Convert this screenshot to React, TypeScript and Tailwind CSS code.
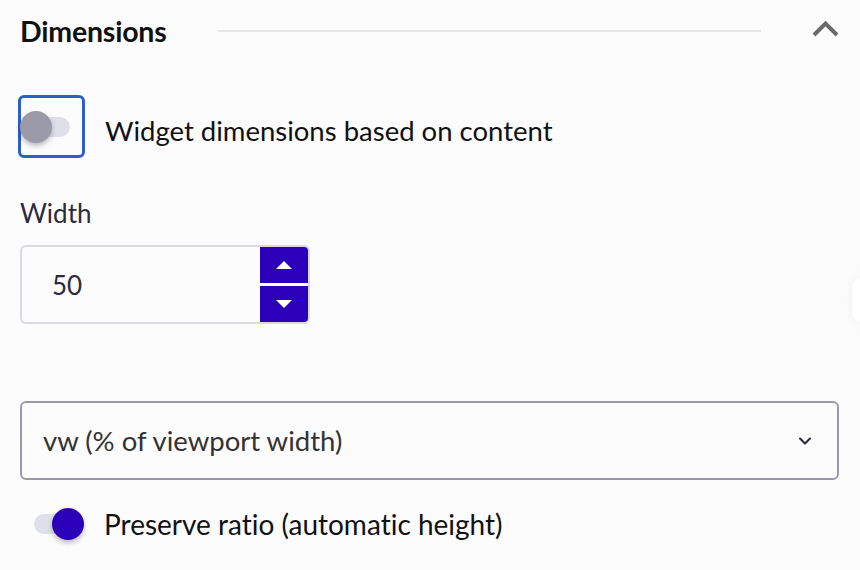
import React from 'react';
import { ChevronDown } from 'lucide-react';

const Toggle: React.FC<{ on: boolean }> = ({ on }) => (
  <div className="relative w-[52px] h-[32px]">
    <div className={`absolute top-[6px] w-[48px] h-[20px] rounded-full bg-[#dfdfe9] ${on ? 'left-[-18px]' : 'left-[2px]'}`} />
    <div
      className={`absolute top-0 w-[32px] h-[32px] rounded-full shadow-[0_3px_5px_rgba(0,0,0,0.25)] ${
        on ? 'left-0 bg-[#2c00b8]' : 'left-0 bg-[#9b9aa8]'
      }`}
    />
  </div>
);

export default function App() {
  return (
    <div className="relative min-h-[570px] overflow-hidden bg-[#fcfcfd] font-['Lato','Liberation_Sans',sans-serif] [font-variant-ligatures:none]">
      {/* section header */}
      <div className="flex h-[62px] items-center pl-[20px] pr-[21px]">
        <h2 className="text-[28.5px] leading-[34px] font-bold text-[#111] tracking-[-0.2px]">Dimensions</h2>
        <div className="mx-[51px] h-[2px] flex-1 bg-[#e6e6e8]" />
        <svg width="27" height="17" viewBox="0 0 27 17" className="mt-[-6px] text-[#6a6a6a]">
          <polyline points="2,15 13.5,3.5 25,15" fill="none" stroke="currentColor" strokeWidth="4" />
        </svg>
      </div>

      {/* content based toggle */}
      <div className="mt-[33px] flex items-center pl-[18px]">
        <div className="flex h-[63px] w-[67px] items-center rounded-[6px] border-[3px] border-[#2d5fcc]">
          <div className="ml-[-1px]">
            <Toggle on={false} />
          </div>
        </div>
        <span className="ml-[20px] mt-[8px] text-[27.5px] leading-[34px] text-[#111]">Widget dimensions based on content</span>
      </div>

      {/* width */}
      <div className="mt-[40px] pl-[20px] text-[26px] leading-[30px] text-[#2b2b3d]">Width</div>
      <div className="mt-[17px] ml-[20px] flex h-[79px] w-[290px] rounded-[6px] border-2 border-[#d9d9e1]">
        <div className="flex flex-1 items-center pl-[30px] pt-[2px] text-[26px] text-[#2b2b3d]">50</div>
        <div className="flex w-[48px] flex-col gap-[3px]">
          <button className="flex flex-1 items-center justify-center rounded-tr-[4px] bg-[#2c00b8]">
            <svg width="16" height="8" viewBox="0 0 16 8"><polygon points="0,8 8,0 16,8" fill="#fff" /></svg>
          </button>
          <button className="flex flex-1 items-center justify-center rounded-br-[4px] bg-[#2c00b8]">
            <svg width="16" height="8" viewBox="0 0 16 8"><polygon points="0,0 16,0 8,8" fill="#fff" /></svg>
          </button>
        </div>
      </div>

      {/* unit select */}
      <div className="mt-[77px] ml-[20px] mr-[21px] flex h-[79px] items-center justify-between rounded-[6px] border-2 border-[#9b99a9] pl-[21px] pr-[22px]">
        <span className="text-[27.5px] leading-[34px] text-[#333]">vw (% of viewport width)</span>
        <ChevronDown size={20} strokeWidth={2.5} className="text-[#2b2b3d]" />
      </div>

      {/* preserve ratio */}
      <div className="mt-[27px] flex items-center pl-[52px]">
        <Toggle on={true} />
        <span className="text-[28px] leading-[34px] text-[#111]">Preserve ratio (automatic height)</span>
      </div>

      {/* floating element clipped at the edge */}
      <div className="absolute left-[852px] top-[278px] h-[44px] w-[40px] rounded-[10px] bg-white shadow-[0_0_14px_rgba(0,0,0,0.05)]" />
    </div>
  );
}
